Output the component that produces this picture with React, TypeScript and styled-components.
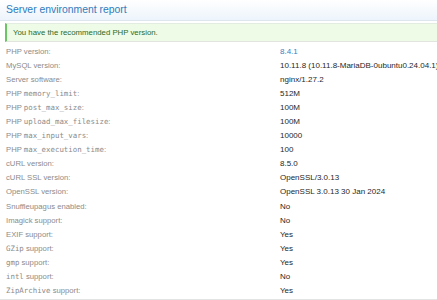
import React from "react";
import styled, { createGlobalStyle } from "styled-components";

const Global = createGlobalStyle`
  html, body { margin: 0; padding: 0; background: #ffffff; }
  body { width: 437px; height: 300px; overflow: hidden; font-family: "Liberation Sans", Arial, sans-serif; }
`;

const Block = styled.div`
  width: 437px;
  height: 300px;
  display: flex;
  flex-direction: column;
  border-bottom: 1px solid #e3e3e3;
  box-sizing: border-box;
`;

const Header = styled.h2`
  margin: 0;
  height: 21px;
  box-sizing: border-box;
  display: flex;
  align-items: center;
  padding: 0 0 1px 6px;
  font-weight: normal;
  font-size: 10.4px;
  color: #2f7bbd;
  background: linear-gradient(to bottom, #ffffff 0%, #edf4fb 100%);
  border-bottom: 1px solid #dde6ef;
`;

const Notice = styled.div`
  margin: 2px 0 2px 5px;
  height: 19px;
  box-sizing: border-box;
  display: flex;
  align-items: center;
  padding-left: 6px;
  font-size: 7.8px;
  color: #2d6a1e;
  background: #edfbe7;
  border-left: 2px solid #6cc564;
  border-top: 1px solid #e3ece0;
  border-bottom: 1px solid #e1e4df;
`;

const List = styled.dl`
  margin: 0;
  padding: 0;
  display: flex;
  flex-direction: column;
`;

const Row = styled.div`
  display: grid;
  grid-template-columns: 274px 1fr;
  height: 14.1px;
  align-items: center;
  padding-left: 6px;
  white-space: nowrap;
`;

const Label = styled.dt`
  margin: 0;
  font-size: 7.7px;
  color: #8b8b8b;
`;

const Value = styled.dd<{ $link?: boolean }>`
  margin: 0;
  font-size: 8px;
  color: ${(p) => (p.$link ? "#3d7dbf" : "#1f1f1f")};
`;

const Code = styled.code`
  font-family: "DejaVu Sans Mono", "Liberation Mono", monospace;
  font-size: 7.4px;
  color: #8b8b8b;
`;

type Item = { label: React.ReactNode; value: string; link?: boolean };

const items: Item[] = [
  { label: "PHP version:", value: "8.4.1", link: true },
  { label: "MySQL version:", value: "10.11.8 (10.11.8-MariaDB-0ubuntu0.24.04.1)" },
  { label: "Server software:", value: "nginx/1.27.2" },
  { label: <>PHP <Code>memory_limit</Code>:</>, value: "512M" },
  { label: <>PHP <Code>post_max_size</Code>:</>, value: "100M" },
  { label: <>PHP <Code>upload_max_filesize</Code>:</>, value: "100M" },
  { label: <>PHP <Code>max_input_vars</Code>:</>, value: "10000" },
  { label: <>PHP <Code>max_execution_time</Code>:</>, value: "100" },
  { label: "cURL version:", value: "8.5.0" },
  { label: "cURL SSL version:", value: "OpenSSL/3.0.13" },
  { label: "OpenSSL version:", value: "OpenSSL 3.0.13 30 Jan 2024" },
  { label: "Snuffleupagus enabled:", value: "No" },
  { label: "Imagick support:", value: "No" },
  { label: "EXIF support:", value: "Yes" },
  { label: <><Code>GZip</Code> support:</>, value: "Yes" },
  { label: <><Code>gmp</Code> support:</>, value: "Yes" },
  { label: <><Code>intl</Code> support:</>, value: "No" },
  { label: <><Code>ZipArchive</Code> support:</>, value: "Yes" },
];

export default function App() {
  return (
    <>
      <Global />
      <Block>
        <Header>Server environment report</Header>
        <Notice>You have the recommended PHP version.</Notice>
        <List>
          {items.map((it, i) => (
            <Row key={i}>
              <Label>{it.label}</Label>
              <Value $link={it.link}>{it.value}</Value>
            </Row>
          ))}
        </List>
      </Block>
    </>
  );
}
